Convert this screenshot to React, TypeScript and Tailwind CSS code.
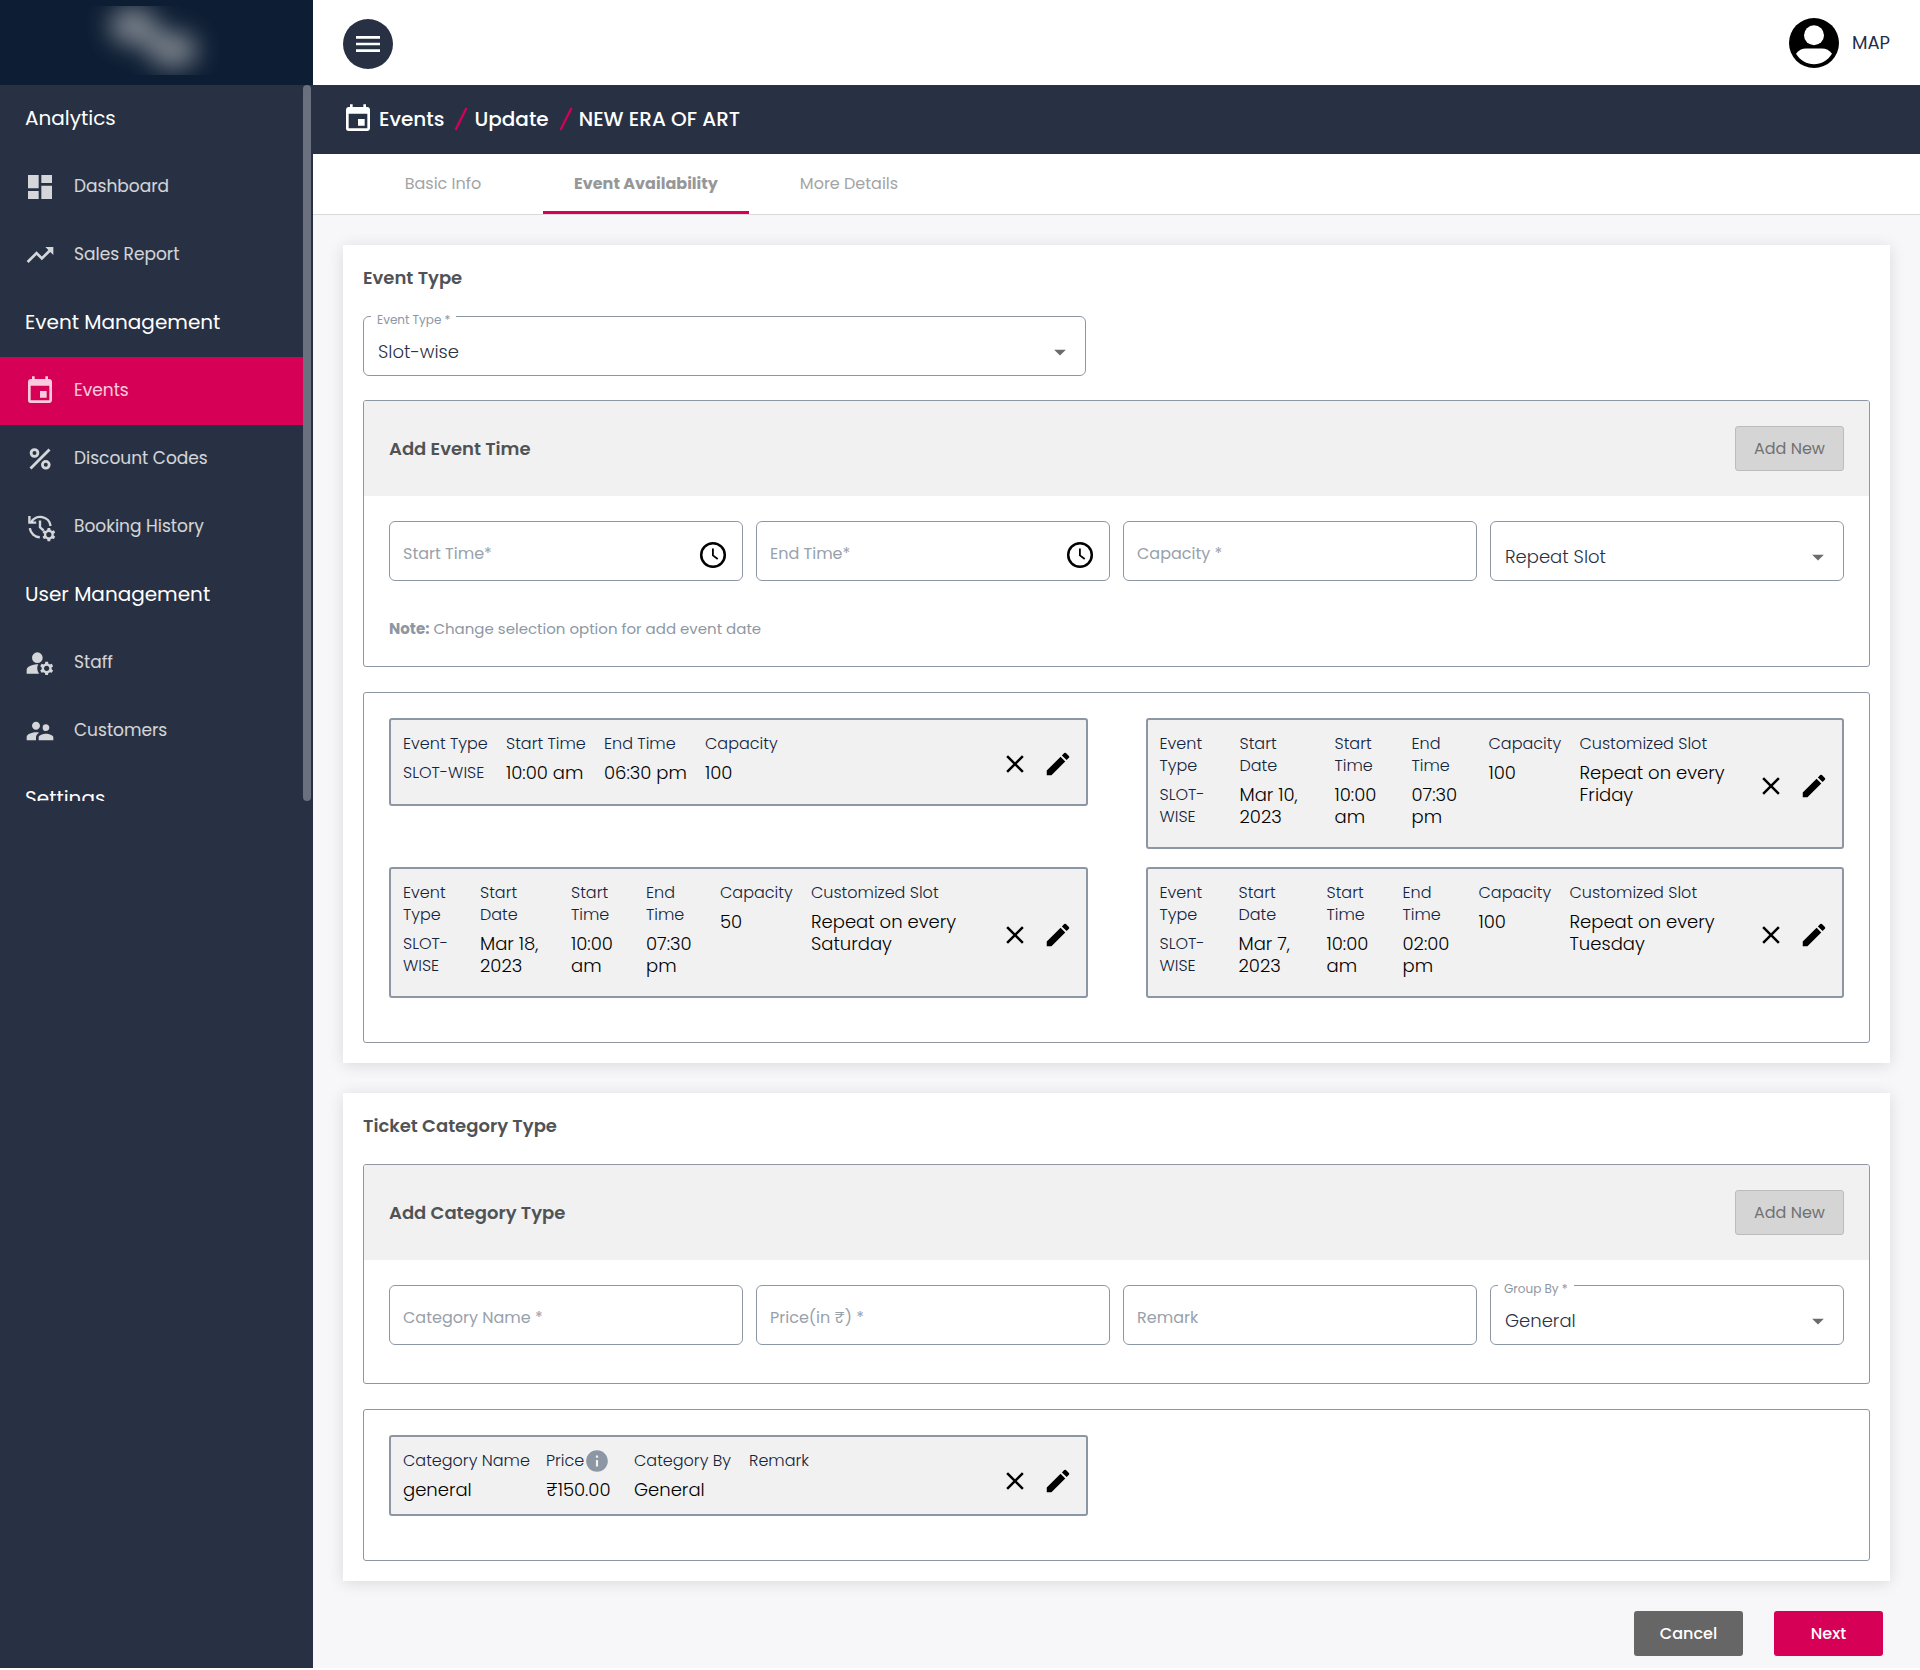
import type { ReactNode } from "react";
import {
  MdArrowDropDown,
  MdClose,
  MdDashboard,
  MdEdit,
  MdEvent,
  MdInfo,
  MdManageAccounts,
  MdMenu,
  MdSupervisorAccount,
  MdTrendingUp,
} from "react-icons/md";

function PercentIcon() {
  return (
    <svg viewBox="0 0 32 32" className="size-8" fill="none" stroke="currentColor" strokeWidth="2.8">
      <circle cx="10.5" cy="10" r="3.4" />
      <circle cx="21.8" cy="21.8" r="3.4" />
      <path d="M6.5 25.5 25.5 6.5" />
    </svg>
  );
}

function HistoryGearIcon() {
  return (
    <svg viewBox="0 0 32 32" className="size-8">
      <g fill="none" stroke="currentColor" strokeWidth="2.4">
        <path d="M7.2 11.2A10.4 10.4 0 0 1 26.6 15" />
        <path d="M5.8 17.2A10.4 10.4 0 0 0 15.8 26.2" />
        <path d="M5.4 5v6.6h6.8" />
        <path d="M16 9.5v6.8l3.6 3.2" />
      </g>
      <g transform="translate(2.6 2.7) scale(1.31)" fill="currentColor">
        <path d="M20.75 16c0-.22-.03-.42-.06-.63l1.14-1.01-1-1.73-1.45.49c-.32-.27-.68-.48-1.08-.63L18 11h-2l-.3 1.49c-.4.15-.76.36-1.08.63l-1.45-.49-1 1.73 1.14 1.01c-.03.21-.06.41-.06.63s.03.42.06.63l-1.14 1.01 1 1.73 1.45-.49c.32.27.68.48 1.08.63L16 21h2l.3-1.49c.4-.15.76-.36 1.08-.63l1.45.49 1-1.73-1.14-1.01c.03-.21.06-.41.06-.63zM17 18c-1.1 0-2-.9-2-2s.9-2 2-2 2 .9 2 2-.9 2-2 2z" />
      </g>
    </svg>
  );
}

function ClockIcon() {
  return (
    <svg viewBox="0 0 32 32" className="size-8" fill="none" stroke="#000">
      <circle cx="16" cy="16" r="11.8" strokeWidth="2.5" />
      <path d="M15.9 9.5v6.9l4.8 3.6" strokeWidth="1.8" />
    </svg>
  );
}

function AvatarIcon() {
  return (
    <svg viewBox="0 0 50 50" className="size-[50px]">
      <circle cx="25" cy="25" r="25" fill="#000" />
      <circle cx="25" cy="17.3" r="10" fill="#fff" />
      <path
        fill="#fff"
        d="M7 35.8C9.5 32.3 13 30.5 17 30.5H33C37 30.5 40.5 32.3 43 35.8C39 42.5 32 46.2 25 46.2S11 42.5 7 35.8Z"
      />
    </svg>
  );
}

function LogoBlur() {
  return (
    <svg viewBox="0 0 313 69" className="h-[69px] w-full">
      <defs>
        <filter id="soft" x="-50%" y="-100%" width="200%" height="300%">
          <feGaussianBlur stdDeviation="12" />
        </filter>
      </defs>
      <g filter="url(#soft)" fill="#788089">
        <ellipse cx="133" cy="20" rx="24" ry="19" />
        <ellipse cx="173" cy="44" rx="25" ry="18" />
        <ellipse cx="152" cy="32" rx="14" ry="12" />
      </g>
    </svg>
  );
}

function NavHeading({ children }: { children: ReactNode }) {
  return <h2 className="flex h-[68px] shrink-0 items-center pb-0.5 pl-[25px] text-xl text-white">{children}</h2>;
}

function NavItem({ icon, label, active }: { icon: ReactNode; label: string; active?: boolean }) {
  return (
    <a
      href="#"
      className={`flex h-[68px] shrink-0 items-center gap-[18px] pl-6 text-[17px] text-white/80 ${
        active ? "bg-[#d60056]" : ""
      }`}
    >
      {icon}
      {label}
    </a>
  );
}

function Sidebar() {
  return (
    <aside className="flex w-[313px] shrink-0 flex-col bg-[#283143]">
      <div className="h-[85px] bg-[#0d1d33] pt-1.5">
        <LogoBlur />
      </div>
      <div className="flex h-[716px] overflow-hidden">
        <nav className="flex flex-1 flex-col">
          <NavHeading>Analytics</NavHeading>
          <NavItem icon={<MdDashboard className="size-8" />} label="Dashboard" />
          <NavItem icon={<MdTrendingUp className="size-8" />} label="Sales Report" />
          <NavHeading>Event Management</NavHeading>
          <NavItem icon={<MdEvent className="size-8" />} label="Events" active />
          <NavItem icon={<PercentIcon />} label="Discount Codes" />
          <NavItem icon={<HistoryGearIcon />} label="Booking History" />
          <NavHeading>User Management</NavHeading>
          <NavItem icon={<MdManageAccounts className="size-8" />} label="Staff" />
          <NavItem icon={<MdSupervisorAccount className="size-8" />} label="Customers" />
          <NavHeading>Settings</NavHeading>
        </nav>
        <div className="mr-0.5 w-2 rounded-full bg-[#6a707d]" />
      </div>
    </aside>
  );
}

function Slash() {
  return (
    <svg viewBox="0 0 14 24" className="mr-1.5 ml-2.5 h-6 w-3.5" stroke="#d60056" strokeWidth="2.2">
      <path d="M1.5 23 12.5 1" />
    </svg>
  );
}

const fieldBox = "h-[60px] w-full rounded-md border border-[#8d97a4] bg-white px-3.5 outline-none";

function TextField({ id, label, time }: { id: string; label: string; time?: boolean }) {
  return (
    <div className="relative">
      <input id={id} className={fieldBox} />
      <label
        htmlFor={id}
        className="pointer-events-none absolute inset-y-0 left-3.5 flex items-center pt-1.5 text-base text-[#98a1ab]"
      >
        {label}
      </label>
      {time && (
        <button type="button" aria-label={`Pick ${label}`} className="absolute top-[18px] right-3.5">
          <ClockIcon />
        </button>
      )}
    </div>
  );
}

function SelectField({ id, label, value, floating }: { id: string; label: string; value: string; floating?: boolean }) {
  return (
    <div className="relative">
      {floating && (
        <label
          htmlFor={id}
          className="absolute -top-1.5 left-2 bg-white px-1.5 text-xs leading-5 text-[#8d97a4]"
        >
          {label}
        </label>
      )}
      <select
        id={id}
        aria-label={label}
        className={`${fieldBox} appearance-none pt-3 text-lg font-light text-[#2b3144]`}
      >
        <option>{value}</option>
      </select>
      <MdArrowDropDown className="pointer-events-none absolute top-[22px] right-3 size-7 text-[#6b6b6b]" />
    </div>
  );
}

function Section({ title, children }: { title: string; children: ReactNode }) {
  return (
    <section className="bg-white px-5 pb-5 shadow-[0_2px_15px_rgba(0,0,0,0.12)]">
      <h3 className="pt-[19px] text-lg leading-7 font-semibold text-[#505356]">{title}</h3>
      {children}
    </section>
  );
}

function FormPanel({ title, children }: { title: string; children: ReactNode }) {
  return (
    <div className="overflow-hidden rounded-[3px] border border-[#8d97a4]">
      <div className="flex items-center justify-between bg-[#f1f1f1] p-[25px]">
        <h4 className="text-lg font-semibold text-[#505356]">{title}</h4>
        <button
          type="button"
          disabled
          className="h-[45px] w-[109px] rounded-[3px] border border-[#bcbcbc] bg-[#d5d5d5] text-base text-[#717171]"
        >
          Add New
        </button>
      </div>
      {children}
    </div>
  );
}

type Entry = { label: ReactNode; value: string; small?: boolean };

function EntryCard({ columns, entries, bottom }: { columns: string; entries: Entry[]; bottom: string }) {
  return (
    <article
      className={`flex items-center rounded-[3px] border-2 border-[#8d97a4] bg-[#f1f1f1] pt-[13px] pr-[13px] pl-3 ${bottom}`}
    >
      <dl className={`grid flex-1 self-start ${columns}`}>
        {entries.map((e, i) => (
          <div key={i} className="flex flex-col gap-[7px]">
            <dt className="text-base leading-[22px] font-light whitespace-pre-line text-[#14243c]">{e.label}</dt>
            <dd
              className={`min-h-[22px] font-light whitespace-pre-line ${
                e.small ? "text-base leading-[22px] text-[#14243c]" : "text-lg leading-[22px] text-black"
              }`}
            >
              {e.value}
            </dd>
          </div>
        ))}
      </dl>
      <div className="flex gap-[13px] pt-2.5">
        <button type="button" aria-label="Remove">
          <MdClose className="size-[30px] text-black" />
        </button>
        <button type="button" aria-label="Edit">
          <MdEdit className="size-[30px] text-black" />
        </button>
      </div>
    </article>
  );
}

function repeatEntries(date: string, end: string, capacity: string, day: string): Entry[] {
  return [
    { label: "Event\nType", value: "SLOT-\nWISE", small: true },
    { label: "Start\nDate", value: `${date},\n2023` },
    { label: "Start\nTime", value: "10:00\nam" },
    { label: "End\nTime", value: `${end}\npm` },
    { label: "Capacity", value: capacity },
    { label: "Customized Slot", value: `Repeat on every\n${day}` },
  ];
}

const tabs = [
  { label: "Basic Info", width: "w-[200px]" },
  { label: "Event Availability", width: "w-[206px]", active: true },
  { label: "More Details", width: "w-[200px]" },
];

export default function App() {
  return (
    <div className="flex bg-white font-['Poppins','Inter',sans-serif]">
      <Sidebar />
      <div className="min-w-0 flex-1 bg-[#f7f7fa]">
        <header className="flex h-[85px] items-center justify-between bg-white px-[30px]">
          <button
            type="button"
            aria-label="Toggle menu"
            className="mt-0.5 flex size-[50px] items-center justify-center rounded-full bg-[#283143] text-white"
          >
            <MdMenu className="size-8" />
          </button>
          <button type="button" className="flex items-center gap-[13px] text-lg text-[#1f2f4a]">
            <AvatarIcon />
            MAP
          </button>
        </header>

        <nav
          aria-label="Breadcrumb"
          className="flex h-[69px] items-center bg-[#283143] pb-0.5 pl-[29px] text-xl font-medium text-white"
        >
          <MdEvent className="mr-[5px] size-8" />
          <a href="#">Events</a>
          <Slash />
          <a href="#">Update</a>
          <Slash />
          <span>NEW ERA OF ART</span>
        </nav>

        <div role="tablist" className="flex h-[61px] border-b border-[#d9dadd] bg-white pl-[30px]">
          {tabs.map((t) => (
            <button
              key={t.label}
              type="button"
              role="tab"
              aria-selected={!!t.active}
              className={`${t.width} border-b-3 pt-0.5 text-base ${
                t.active ? "border-[#d60056] font-bold text-[#969799]" : "border-transparent text-[#a3a4a6]"
              }`}
            >
              {t.label}
            </button>
          ))}
        </div>

        <main className="flex flex-col gap-[30px] px-[30px] pt-[30px] pb-3">
          <Section title="Event Type">
            <div className="mt-6 w-[48%]">
              <SelectField id="event-type" label="Event Type *" value="Slot-wise" floating />
            </div>
            <div className="mt-6 flex flex-col gap-[25px]">
              <FormPanel title="Add Event Time">
                <div className="grid grid-cols-4 gap-[13px] px-[25px] pt-[25px]">
                  <TextField id="start-time" label="Start Time*" time />
                  <TextField id="end-time" label="End Time*" time />
                  <TextField id="capacity" label="Capacity *" />
                  <SelectField id="repeat-slot" label="Repeat Slot" value="Repeat Slot" />
                </div>
                <p className="px-[25px] pt-[37px] pb-[26px] text-[15px] leading-[22px] text-[#8d97a4]">
                  <b>Note:</b> Change selection option for add event date
                </p>
              </FormPanel>
              <div className="grid grid-cols-2 items-start gap-x-[58px] gap-y-[18px] rounded-[3px] border border-[#8d97a4] px-[25px] pt-[25px] pb-11">
                <EntryCard
                  columns="grid-cols-[103px_98px_101px_1fr]"
                  bottom="pb-5"
                  entries={[
                    { label: "Event Type", value: "SLOT-WISE", small: true },
                    { label: "Start Time", value: "10:00 am" },
                    { label: "End Time", value: "06:30 pm" },
                    { label: "Capacity", value: "100" },
                  ]}
                />
                <EntryCard
                  columns="grid-cols-[80px_95px_77px_77px_91px_1fr]"
                  bottom="pb-[19px]"
                  entries={repeatEntries("Mar 10", "07:30", "100", "Friday")}
                />
                <EntryCard
                  columns="grid-cols-[77px_91px_75px_74px_91px_1fr]"
                  bottom="pb-[19px]"
                  entries={repeatEntries("Mar 18", "07:30", "50", "Saturday")}
                />
                <EntryCard
                  columns="grid-cols-[79px_88px_76px_76px_91px_1fr]"
                  bottom="pb-[19px]"
                  entries={repeatEntries("Mar 7", "02:00", "100", "Tuesday")}
                />
              </div>
            </div>
          </Section>

          <Section title="Ticket Category Type">
            <div className="mt-6 flex flex-col gap-[25px]">
              <FormPanel title="Add Category Type">
                <div className="grid grid-cols-4 gap-[13px] px-[25px] pt-[25px] pb-[38px]">
                  <TextField id="category-name" label="Category Name *" />
                  <TextField id="price" label="Price(in ₹) *" />
                  <TextField id="remark" label="Remark" />
                  <SelectField id="group-by" label="Group By *" value="General" floating />
                </div>
              </FormPanel>
              <div className="grid grid-cols-2 gap-x-[58px] rounded-[3px] border border-[#8d97a4] px-[25px] pt-[25px] pb-11">
                <EntryCard
                  columns="grid-cols-[143px_88px_115px_1fr]"
                  bottom="pb-[13px]"
                  entries={[
                    { label: "Category Name", value: "general" },
                    {
                      label: (
                        <span className="flex h-[22px] items-center">
                          Price
                          <MdInfo className="size-[26px] shrink-0 text-[#8d97a4]" />
                        </span>
                      ),
                      value: "₹150.00",
                    },
                    { label: "Category By", value: "General" },
                    { label: "Remark", value: "" },
                  ]}
                />
              </div>
            </div>
          </Section>

          <div className="flex justify-end gap-[31px] pr-[7px]">
            <button type="button" className="h-[45px] w-[109px] rounded-[3px] bg-[#666] text-base font-medium text-white">
              Cancel
            </button>
            <button
              type="button"
              className="h-[45px] w-[109px] rounded-[3px] bg-[#d60056] text-base font-medium text-white"
            >
              Next
            </button>
          </div>
        </main>
      </div>
    </div>
  );
}
